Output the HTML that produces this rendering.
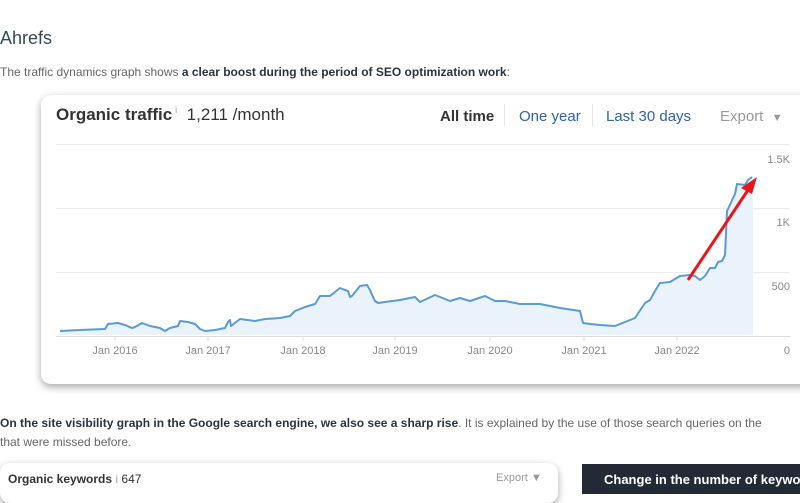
<!DOCTYPE html>
<html><head><meta charset="utf-8"><style>
*{margin:0;padding:0;box-sizing:border-box}
body{width:800px;height:480px;overflow:hidden;background:#fff;font-family:"Liberation Sans",sans-serif;position:relative}
.abs{position:absolute;white-space:nowrap}
.p{font-size:12px;color:#666}
.p b{color:#2a3340}
.card{position:absolute;background:#fff;border-radius:10px;box-shadow:0 3px 8px rgba(0,0,0,.35)}
</style></head><body>
<div class="abs" style="left:0;top:28px;font-size:18px;color:#34495e">Ahrefs</div>
<div class="abs p" style="left:0;top:65px">The traffic dynamics graph shows <b>a clear boost during the period of SEO optimization work</b>:</div>

<div class="card" style="left:41px;top:95px;width:780px;height:289px"></div>
<div class="abs" style="left:56px;top:105px;font-size:17px;color:#333"><b>Organic traffic</b><span style="font-size:10px;color:#aaa;vertical-align:top"> i</span>&nbsp; 1,211 /month</div>
<div class="abs" style="left:440px;top:108px;font-size:15px;color:#333;font-weight:bold">All time</div>
<div class="abs" style="left:504px;top:104px;width:1px;height:22px;background:#e6e6e6"></div>
<div class="abs" style="left:519px;top:108px;font-size:15px;color:#2d63a8">One year</div>
<div class="abs" style="left:592px;top:104px;width:1px;height:22px;background:#e6e6e6"></div>
<div class="abs" style="left:606px;top:108px;font-size:15px;color:#2d63a8">Last 30 days</div>
<div class="abs" style="left:720px;top:108px;font-size:15px;color:#999">Export &nbsp;<span style="font-size:11px">▼</span></div>

<svg class="abs" style="left:0;top:0" width="800" height="400">
<g stroke="#ececec" stroke-width="1"><line x1="56" y1="144.5" x2="790" y2="144.5"/><line x1="56" y1="208.5" x2="790" y2="208.5"/><line x1="56" y1="272.5" x2="790" y2="272.5"/></g>
<line x1="56" y1="336.5" x2="790" y2="336.5" stroke="#ddd"/>
<g stroke="#ddd"><line x1="115" y1="336" x2="115" y2="341"/><line x1="208" y1="336" x2="208" y2="341"/><line x1="303" y1="336" x2="303" y2="341"/><line x1="395" y1="336" x2="395" y2="341"/><line x1="490" y1="336" x2="490" y2="341"/><line x1="584" y1="336" x2="584" y2="341"/><line x1="677" y1="336" x2="677" y2="341"/></g>
<polygon fill="#eaf2fc" points="60,331 80,330 105,329 108,324 118,323 125,325 132,328 135,327 142,323 150,326 160,328 165,331 170,328 178,326 180,321 188,322 195,324 200,329 205,331 215,330 225,328 228,322 230,320 231,326 240,319 255,321 265,319 280,318 290,316 295,311 305,307 315,304 320,296 330,296 335,292 340,288 345,290 348,291 350,297 352,296 360,286 367,285 370,290 373,297 375,301 378,303 385,302 400,300 415,297 420,302 435,295 440,297 450,301 460,298 470,301 485,296 495,301 505,301 520,304 540,304 560,308 580,311 583,323 590,324 600,325 615,326 625,322 635,318 645,303 650,300 655,291 660,283 670,282 680,276 690,275 695,276 700,280 705,276 710,268 715,268 718,262 722,261 725,255 727,211 735,194 737,184 745,185 748,180 752,177 753,177 753,335 60,335"/>
<polyline fill="none" stroke="#5b9bd5" stroke-width="2" stroke-linejoin="round" points="60,331 80,330 105,329 108,324 118,323 125,325 132,328 135,327 142,323 150,326 160,328 165,331 170,328 178,326 180,321 188,322 195,324 200,329 205,331 215,330 225,328 228,322 230,320 231,326 240,319 255,321 265,319 280,318 290,316 295,311 305,307 315,304 320,296 330,296 335,292 340,288 345,290 348,291 350,297 352,296 360,286 367,285 370,290 373,297 375,301 378,303 385,302 400,300 415,297 420,302 435,295 440,297 450,301 460,298 470,301 485,296 495,301 505,301 520,304 540,304 560,308 580,311 583,323 590,324 600,325 615,326 625,322 635,318 645,303 650,300 655,291 660,283 670,282 680,276 690,275 695,276 700,280 705,276 710,268 715,268 718,262 722,261 725,255 727,211 735,194 737,184 745,185 748,180 752,177"/>
<line x1="688" y1="280" x2="750" y2="187" stroke="#e8161b" stroke-width="3"/>
<polygon points="757,177 741,188 752,194" fill="#e8161b"/>
<g font-family="Liberation Sans" font-size="11" fill="#888">
<text x="115" y="354" text-anchor="middle">Jan 2016</text><text x="208" y="354" text-anchor="middle">Jan 2017</text><text x="303" y="354" text-anchor="middle">Jan 2018</text><text x="395" y="354" text-anchor="middle">Jan 2019</text><text x="490" y="354" text-anchor="middle">Jan 2020</text><text x="584" y="354" text-anchor="middle">Jan 2021</text><text x="677" y="354" text-anchor="middle">Jan 2022</text>
<text x="790" y="163" text-anchor="end">1.5K</text><text x="790" y="226" text-anchor="end">1K</text><text x="790" y="290" text-anchor="end">500</text><text x="790" y="354" text-anchor="end">0</text>
</g>
</svg>

<div class="abs p" style="left:0;top:416px"><b>On the site visibility graph in the Google search engine, we also see a sharp rise</b>. It is explained by the use of those search queries on the</div>
<div class="abs p" style="left:0;top:435px">that were missed before.</div>

<div class="card" style="left:0;top:463px;width:558px;height:40px"></div>
<div class="abs" style="left:8px;top:472px;font-size:12px;color:#333"><b>Organic keywords</b> <span style="color:#aaa">i</span> 647</div>
<div class="abs" style="left:496px;top:472px;font-size:11px;color:#999">Export ▼</div>
<div class="abs" style="left:582px;top:464px;width:230px;height:30px;background:#232a36"></div>
<div class="abs" style="left:604px;top:472px;font-size:13px;color:#fff;font-weight:bold">Change in the number of keywords</div>
</body></html>
